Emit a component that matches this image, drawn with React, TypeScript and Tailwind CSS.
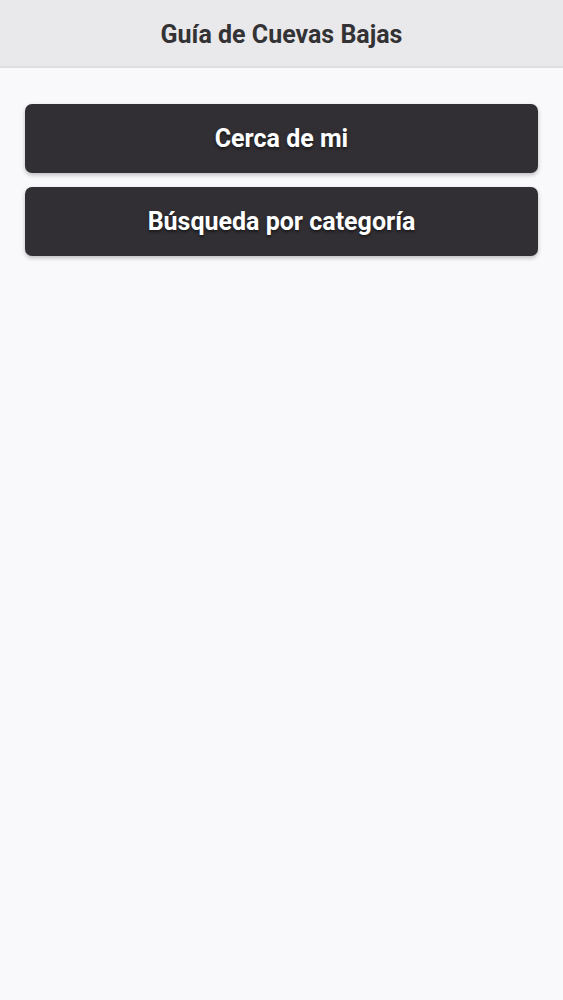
export default function App() {
  return (
    <div className="min-h-screen bg-[#f9f8fb] font-['Roboto',sans-serif]">
      <header className="flex h-[68px] items-center justify-center border-b-2 border-[#dedde0] bg-[#e9e8ea] pt-[3px]">
        <h1 className="text-[25px] font-bold text-[#333235]">Guía de Cuevas Bajas</h1>
      </header>
      <main className="flex flex-col gap-[14px] px-[25px] pt-[36px]">
        {["Cerca de mi", "Búsqueda por categoría"].map((label) => (
          <button
            key={label}
            className="flex h-[69px] items-center justify-center rounded-[7px] bg-[#312f33] text-[25px] font-bold text-white shadow-[0_2px_4px_rgba(0,0,0,0.25)] [text-shadow:0_2px_3px_rgba(0,0,0,0.5)]"
          >
            {label}
          </button>
        ))}
      </main>
    </div>
  );
}
